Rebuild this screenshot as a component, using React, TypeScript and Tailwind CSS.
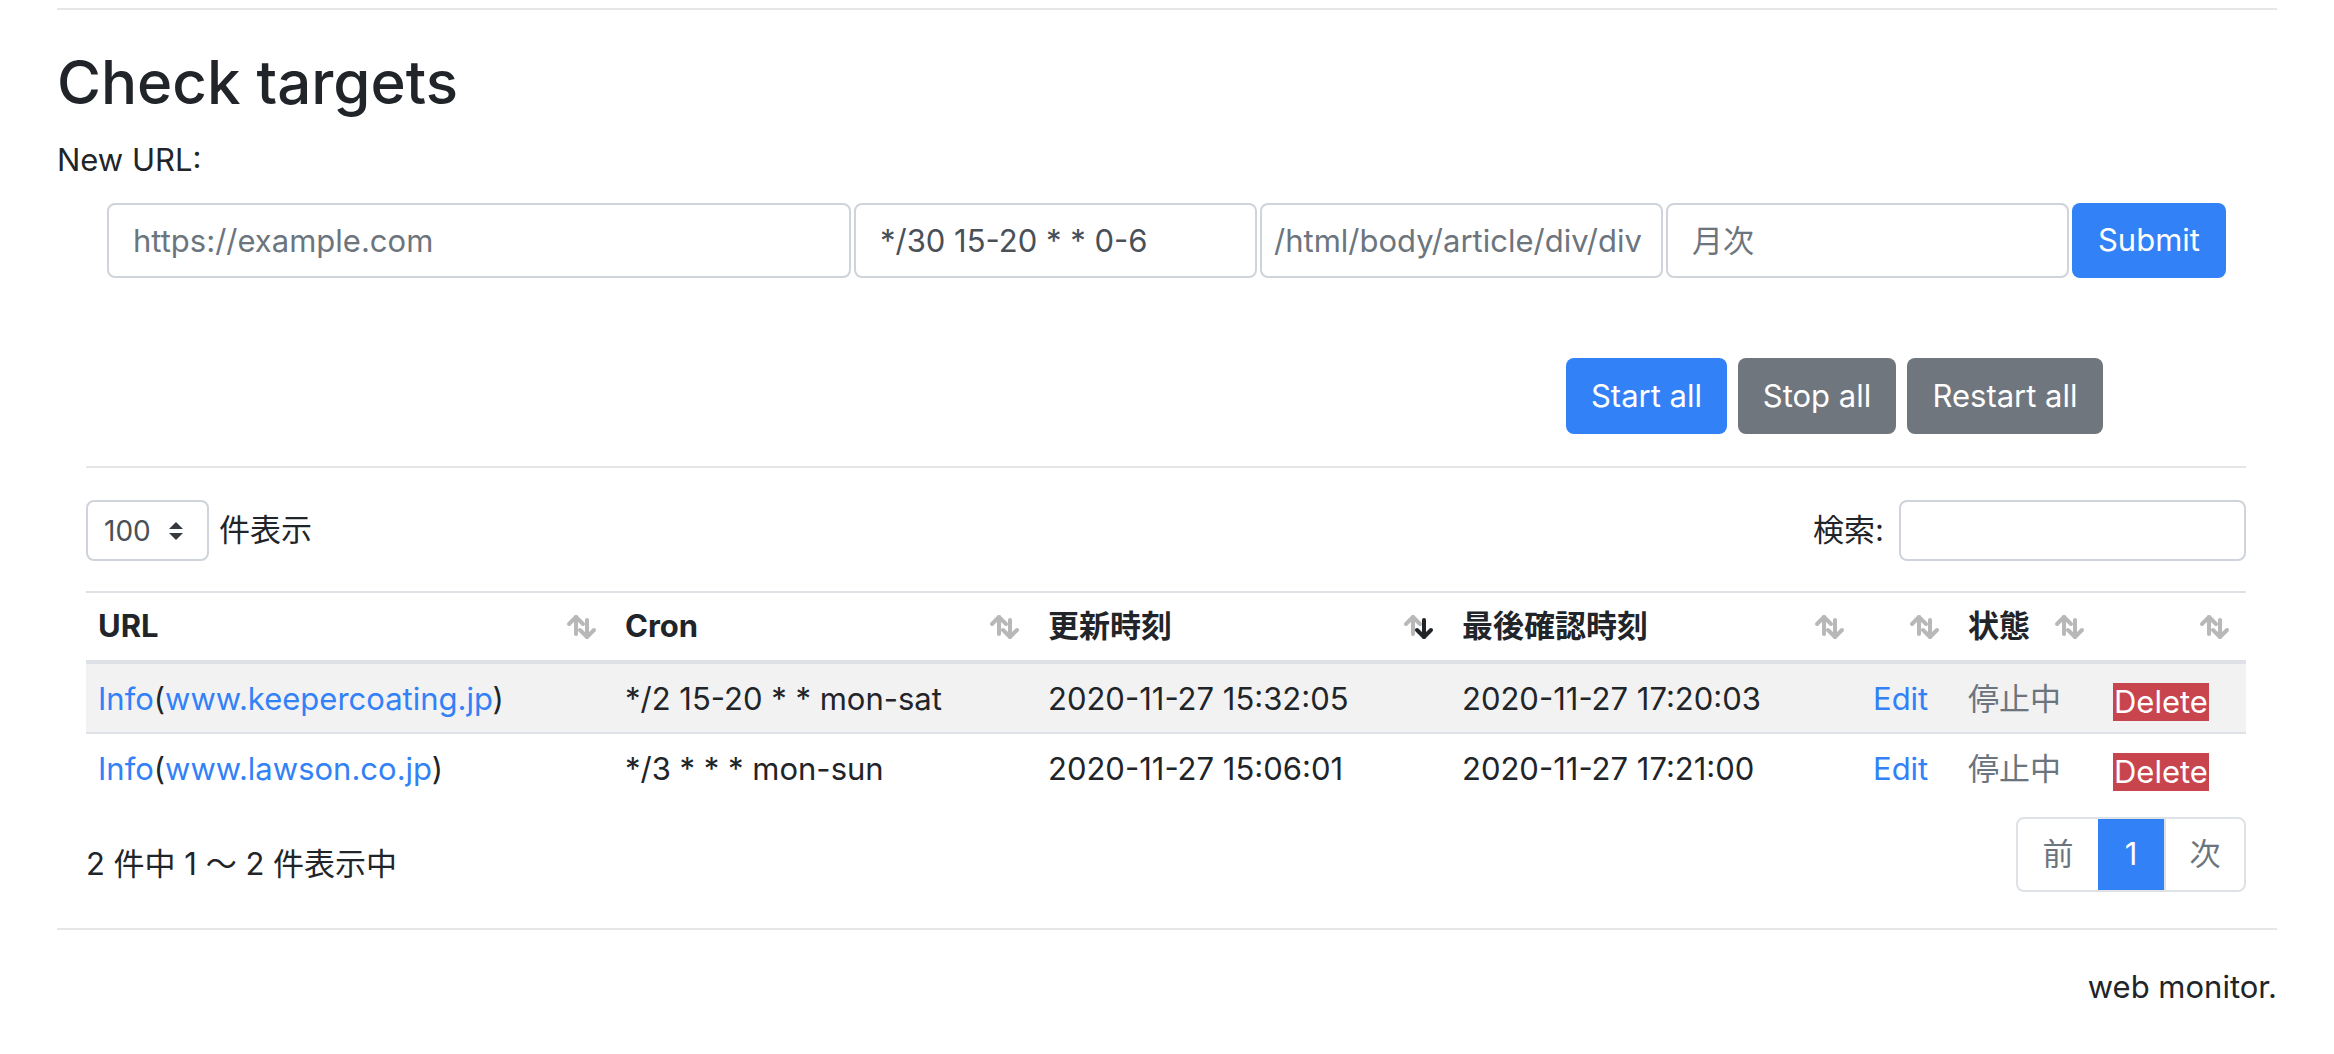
function SortIcon({ active }: { active?: boolean }) {
  return (
    <svg className="absolute right-[16px] top-1/2 -translate-y-1/2" width="31" height="26" viewBox="0 0 31 26" fill="none">
      <g stroke="#b8b8b8" strokeWidth="4" strokeLinecap="round" strokeLinejoin="round">
        <path d="M10 3V20" />
        <path d="M3 10L10 3L17 10" />
      </g>
      <g stroke={active ? "#212529" : "#b8b8b8"} strokeWidth="4" strokeLinecap="round" strokeLinejoin="round">
        <path d="M21 6V23" />
        <path d="M14 16L21 23L28 16" />
      </g>
    </svg>
  );
}

function Th({ label, active }: { label?: string; active?: boolean }) {
  return (
    <th className="relative text-left align-bottom font-bold px-[12px] pt-[10px] pb-[11px] border-t-2 border-b-4 border-[#dee2e6] leading-[46px]">
      {label}
      <SortIcon active={active} />
    </th>
  );
}

const rows = [
  {
    host: "www.keepercoating.jp",
    cron: "*/2 15-20 * * mon-sat",
    updated: "2020-11-27 15:32:05",
    checked: "2020-11-27 17:20:03",
  },
  {
    host: "www.lawson.co.jp",
    cron: "*/3 * * * mon-sun",
    updated: "2020-11-27 15:06:01",
    checked: "2020-11-27 17:21:00",
  },
];

const td = "border-t-2 border-[#dee2e6] px-[12px] pt-[11px] pb-[10px] leading-[47px] whitespace-nowrap";

export default function App() {
  return (
    <div className="min-h-[1054px] bg-white px-[57px] pt-[8px] text-[31px] text-[#212529] font-['Inter','Noto_Sans_CJK_JP',sans-serif]">
      <div className="border-t-2 border-[#e6e6e6]" />
      <h2 className="mt-[35px] text-[60px] font-medium leading-[74px]">Check targets</h2>
      <div className="mt-[18px] leading-[45px]">New URL:</div>

      <form className="mt-[21px] ml-[50px] mr-[51px] flex gap-[3px]" onSubmit={(e) => e.preventDefault()}>
        <input
          className="w-[744px] h-[75px] rounded-[8px] border-2 border-[#ced4da] px-[24px] text-[#495057] placeholder:text-[#6c757d] outline-none"
          placeholder="https://example.com"
        />
        <input
          className="w-[403px] h-[75px] rounded-[8px] border-2 border-[#ced4da] px-[24px] text-[#495057] outline-none"
          defaultValue="*/30 15-20 * * 0-6"
        />
        <input
          className="w-[403px] h-[75px] rounded-[8px] border-2 border-[#ced4da] px-[12px] text-[#495057] placeholder:text-[#6c757d] outline-none"
          placeholder="/html/body/article/div/div"
        />
        <input
          className="w-[403px] h-[75px] rounded-[8px] border-2 border-[#ced4da] px-[24px] text-[#495057] placeholder:text-[#6c757d] outline-none"
          placeholder="月次"
        />
        <button className="w-[154px] h-[75px] rounded-[8px] bg-[#3381f6] text-white">Submit</button>
      </form>

      <div className="mt-[80px] mr-[174px] flex justify-end gap-[11px]">
        <button className="h-[76px] w-[161px] rounded-[8px] bg-[#3381f6] text-white">Start all</button>
        <button className="h-[76px] w-[158px] rounded-[8px] bg-[#6f767d] text-white">Stop all</button>
        <button className="h-[76px] w-[196px] rounded-[8px] bg-[#6f767d] text-white">Restart all</button>
      </div>

      <div className="mx-[29px] mr-[31px] mt-[32px] border-t-2 border-[#e6e6e6]">
        <div className="mt-[32px] flex items-center justify-between">
          <label className="flex items-center gap-[10px]">
            <span className="flex h-[61px] w-[123px] items-center justify-between rounded-[8px] border-2 border-[#ced4da] pl-[16px] pr-[24px] text-[28px] text-[#495057]">
              100
              <svg width="14" height="18" viewBox="0 0 14 18" fill="#343a40">
                <path d="M7 0L14 7H0Z" />
                <path d="M7 18L14 11H0Z" />
              </svg>
            </span>
            件表示
          </label>
          <label className="flex items-center gap-[15px]">
            検索:
            <input className="h-[61px] w-[347px] rounded-[8px] border-2 border-[#ced4da] px-[16px] text-[28px] outline-none" />
          </label>
        </div>

        <table className="mt-[30px] w-full table-fixed border-collapse">
          <colgroup>
            <col className="w-[527px]" />
            <col className="w-[423px]" />
            <col className="w-[414px]" />
            <col className="w-[411px]" />
            <col className="w-[95px]" />
            <col className="w-[145px]" />
            <col />
          </colgroup>
          <thead>
            <tr>
              <Th label="URL" />
              <Th label="Cron" />
              <Th label="更新時刻" active />
              <Th label="最後確認時刻" />
              <Th />
              <Th label="状態" />
              <Th />
            </tr>
          </thead>
          <tbody>
            {rows.map((r, i) => (
              <tr key={r.host} className={i % 2 === 0 ? "bg-[#f2f2f2]" : ""}>
                <td className={td}>
                  <a className="text-[#3381f6]">Info</a>(<a className="text-[#3381f6]">{r.host}</a>)
                </td>
                <td className={td}>{r.cron}</td>
                <td className={td}>{r.updated}</td>
                <td className={td}>{r.checked}</td>
                <td className={td + " text-[#3381f6]"}>Edit</td>
                <td className={td + " text-[#6c757d]"}>停止中</td>
                <td className={td}>
                  <span className="inline-block bg-[#c8454e] px-[1px] leading-[38px] text-white align-middle">Delete</span>
                </td>
              </tr>
            ))}
          </tbody>
        </table>

        <div className="mt-[15px] flex items-start justify-between">
          <div className="pt-[24px] leading-[45px]">2 件中 1 〜 2 件表示中</div>
          <div className="flex h-[75px] overflow-hidden rounded-[8px] border-2 border-[#dee2e6]">
            <span className="flex w-[80px] items-center justify-center text-[#6c757d]">前</span>
            <span className="flex w-[66px] items-center justify-center bg-[#3381f6] text-white">1</span>
            <span className="flex w-[80px] items-center justify-center border-l-2 border-[#dee2e6] text-[#6c757d]">次</span>
          </div>
        </div>
      </div>

      <div className="mt-[36px] border-t-2 border-[#e6e6e6]" />
      <div className="mt-[34px] text-right leading-[45px]">web monitor.</div>
    </div>
  );
}
